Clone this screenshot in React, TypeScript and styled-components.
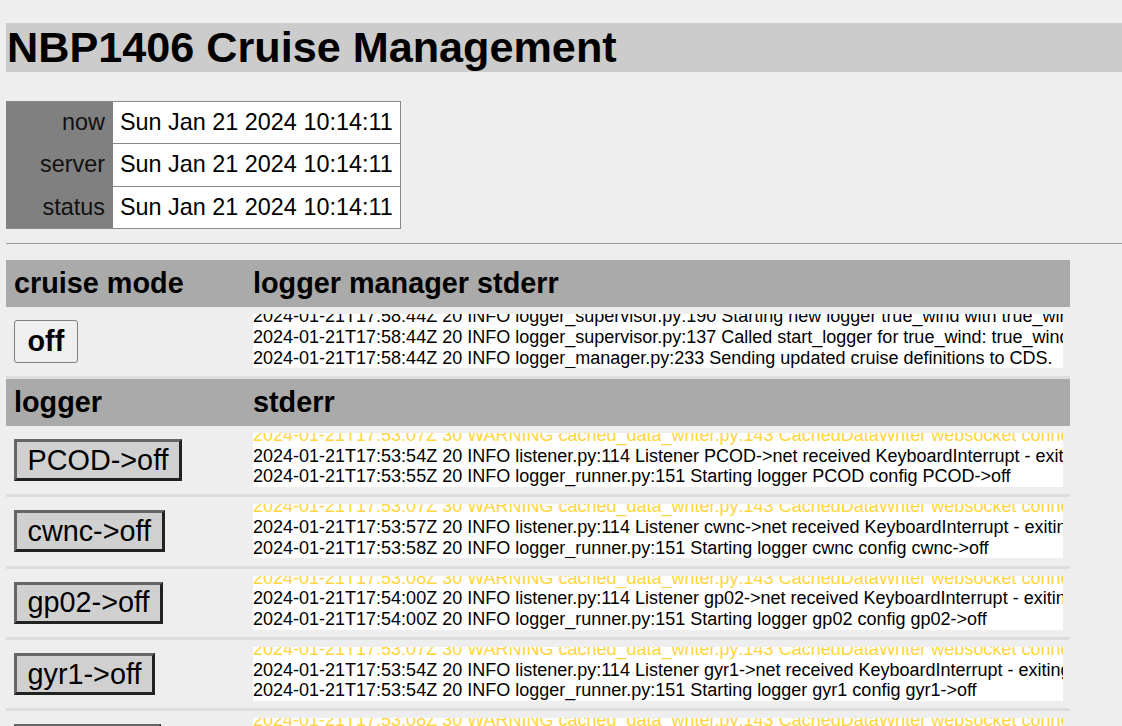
import styled, { createGlobalStyle } from "styled-components";

const GlobalStyle = createGlobalStyle`
  html {
    overflow: hidden;
  }
  body {
    margin: 0;
    padding: 0 0 0 6px;
    background-color: #eeeeee;
    font-family: "Liberation Sans", Arial, sans-serif;
    font-size: 18px;
    color: #000;
  }
`;

const Title = styled.h1`
  margin: 23px 0 29px;
  height: 49px;
  padding-left: 1px;
  background-color: #cccccc;
  font-size: 43.2px;
  line-height: 49px;
  font-weight: 700;
`;

const StatusTable = styled.div`
  display: grid;
  grid-template-columns: 107px 1fr;
  grid-template-rows: 42.33px 42.33px 41.34px;
  width: 395px;
  box-sizing: border-box;
  border: 1px solid #888888;
  border-left: 0;
  font-size: 23.4px;
`;

const StatusLabel = styled.div`
  line-height: 41px;
  background-color: #808080;
  color: #111;
  text-align: right;
  padding-right: 8px;
`;

const StatusValue = styled.div<{ $last?: boolean }>`
  box-sizing: border-box;
  line-height: 41px;
  background-color: #ffffff;
  padding-left: 7px;
  border-bottom: ${(p) => (p.$last ? "0" : "1px solid #888888")};
`;

const Rule = styled.hr`
  margin: 14px 0 16px;
  border: 0;
  border-top: 1px solid #999999;
`;

const Board = styled.div`
  width: 1064px;
`;

const HeadRow = styled.div`
  display: grid;
  grid-template-columns: 239px 1fr;
  height: 47px;
  background-color: #aaaaaa;
  font-size: 28.8px;
  font-weight: 700;
  line-height: 47px;
`;

const HeadCell = styled.div`
  padding-left: 8px;
`;

const Row = styled.div<{ $tall?: boolean }>`
  display: grid;
  grid-template-columns: 239px 1fr;
  align-items: center;
  height: ${(p) => (p.$tall ? "72px" : "71.33px")};
  box-sizing: border-box;
  border-bottom: 3px solid #dddddd;
`;

const ButtonCell = styled.div`
  padding-left: 8px;
`;

const ModeButton = styled.button`
  height: 43px;
  padding: 0 12.5px;
  border: 1px solid #808080;
  border-radius: 3px;
  background-color: #efefef;
  font-family: inherit;
  font-size: 28.8px;
  font-weight: 700;
  color: #000;
`;

const LoggerButton = styled.button`
  height: 42px;
  padding: 0 10.5px;
  border: 3px solid;
  border-color: #666666 #222222 #222222 #666666;
  background-color: #d0d0d0;
  font-family: inherit;
  font-size: 28.8px;
  color: #000;
`;

const LogCell = styled.div`
  padding: 0 7px 0 8px;
  min-width: 0;
`;

const LogBox = styled.div`
  display: flex;
  flex-direction: column;
  justify-content: flex-end;
  height: 54px;
  overflow: hidden;
  background-color: #ffffff;
  font-size: 18px;
  line-height: 20.7px;
`;

const LogLine = styled.div<{ $warn?: boolean }>`
  flex: none;
  white-space: nowrap;
  overflow: hidden;
  color: ${(p) => (p.$warn ? "#ffd53d" : "#000")};
`;

const now = "Sun Jan 21 2024 10:14:11";

const wsWarn = (time: string) =>
  `2024-01-21T17:${time}Z 30 WARNING cached_data_writer.py:143 CachedDataWriter websocket connection to ws://localhost:8766 failed`;

const loggers = [
  { name: "PCOD", warn: "53:07", t1: "53:54", t2: "53:55" },
  { name: "cwnc", warn: "53:07", t1: "53:57", t2: "53:58" },
  { name: "gp02", warn: "53:08", t1: "54:00", t2: "54:00" },
  { name: "gyr1", warn: "53:07", t1: "53:54", t2: "53:54" },
  { name: "knud", warn: "53:08", t1: "53:57", t2: "53:58" },
];

export default function App() {
  return (
    <>
      <GlobalStyle />
      <Title>NBP1406 Cruise Management</Title>
      <StatusTable>
        <StatusLabel>now</StatusLabel>
        <StatusValue>{now}</StatusValue>
        <StatusLabel>server</StatusLabel>
        <StatusValue>{now}</StatusValue>
        <StatusLabel>status</StatusLabel>
        <StatusValue $last>{now}</StatusValue>
      </StatusTable>
      <Rule />
      <Board>
        <HeadRow>
          <HeadCell>cruise mode</HeadCell>
          <HeadCell>logger manager stderr</HeadCell>
        </HeadRow>
        <Row $tall>
          <ButtonCell>
            <ModeButton>off</ModeButton>
          </ButtonCell>
          <LogCell>
            <LogBox>
              <LogLine>2024-01-21T17:58:44Z 20 INFO logger_supervisor.py:190 Starting new logger true_wind with true_wind config</LogLine>
              <LogLine>2024-01-21T17:58:44Z 20 INFO logger_supervisor.py:137 Called start_logger for true_wind: true_wind config</LogLine>
              <LogLine>2024-01-21T17:58:44Z 20 INFO logger_manager.py:233 Sending updated cruise definitions to CDS.</LogLine>
            </LogBox>
          </LogCell>
        </Row>
        <HeadRow>
          <HeadCell>logger</HeadCell>
          <HeadCell>stderr</HeadCell>
        </HeadRow>
        {loggers.map((l) => (
          <Row key={l.name}>
            <ButtonCell>
              <LoggerButton>{l.name}-&gt;off</LoggerButton>
            </ButtonCell>
            <LogCell>
              <LogBox>
                <LogLine $warn>{wsWarn(l.warn)}</LogLine>
                <LogLine>{`2024-01-21T17:${l.t1}Z 20 INFO listener.py:114 Listener ${l.name}->net received KeyboardInterrupt - exiting.`}</LogLine>
                <LogLine>{`2024-01-21T17:${l.t2}Z 20 INFO logger_runner.py:151 Starting logger ${l.name} config ${l.name}->off`}</LogLine>
              </LogBox>
            </LogCell>
          </Row>
        ))}
      </Board>
    </>
  );
}
